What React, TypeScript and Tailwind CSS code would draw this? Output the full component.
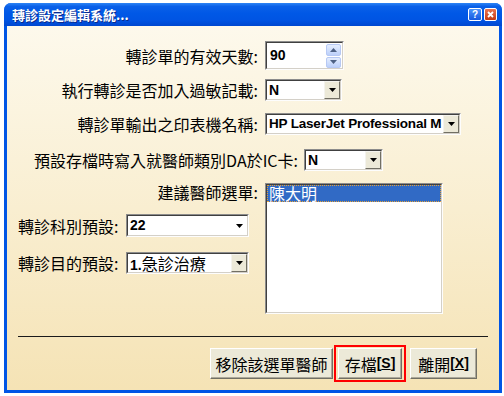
import React from 'react';

// sunken classic edit/list frame
function Field({ className, children }: { className: string; children?: React.ReactNode }) {
  return (
    <div className={`border border-t-[#8c8c8c] border-l-[#8c8c8c] border-b-[#fdfdfd] border-r-[#fdfdfd] ${className}`}>
      <div className="flex h-full w-full items-center border border-t-[#404040] border-l-[#404040] border-b-[#d4d0c8] border-r-[#d4d0c8] bg-white">
        {children}
      </div>
    </div>
  );
}

function Caret() {
  return (
    <svg width="7" height="4" viewBox="0 0 7 4">
      <path d="M0 0h7L3.5 4z" fill="#000" />
    </svg>
  );
}

function DropButton() {
  return (
    <div className="flex h-full w-[16px] shrink-0 items-center justify-center border border-t-[#f4f3ee] border-l-[#f4f3ee] border-b-[#716f64] border-r-[#716f64] bg-[#ece9d8]">
      <Caret />
    </div>
  );
}

function SpinArrow({ up }: { up?: boolean }) {
  return (
    <div className="flex h-[13px] w-[15px] items-center justify-center rounded-[2px] border border-[#b7c9f4] bg-gradient-to-b from-[#e4edfe] to-[#bcd0fa]">
      <svg width="7" height="4" viewBox="0 0 7 4">
        <path d={up ? 'M0 4L3.5 0L7 4z' : 'M0 0h7L3.5 4z'} fill="#4d6185" />
      </svg>
    </div>
  );
}

function Label({ className, children }: { className: string; children: React.ReactNode }) {
  return <div className={`text-[16px] leading-[18px] whitespace-nowrap ${className}`}>{children}</div>;
}

const latin = "font-['Liberation_Sans',Arial,sans-serif] font-bold text-[14px]";

function Button({ className, children }: { className: string; children: React.ReactNode }) {
  return (
    <div className={`flex h-[31px] items-center justify-center border border-t-white border-l-white border-b-[#716f64] border-r-[#716f64] bg-[#ece9d8] text-[16px] shadow-[inset_-1px_-1px_0_#aca899] ${className}`}>
      {children}
    </div>
  );
}

export default function App() {
  return (
    <div className="h-[396px] w-[504px] overflow-hidden bg-white font-['Noto_Sans_CJK_TC',sans-serif] text-black">
      <div className="ml-[4px] mt-[3px] flex h-[390px] w-[498px] flex-col rounded-t-[7px] bg-[#0055e5]">
        {/* title bar */}
        <div className="flex h-[23px] items-center rounded-t-[7px] bg-[linear-gradient(180deg,#2d84f5_0%,#0a60e8_15%,#0058e6_45%,#0054e3_75%,#0048d0_100%)] pl-[8px] pr-[5px]">
          <div className="flex-1 text-[13px] font-bold leading-none text-white [text-shadow:1px_1px_0_#0b2a8c]">
            轉診設定編輯系統...
          </div>
          <div className="flex h-[13px] w-[14px] items-center justify-center rounded-[2px] border border-white bg-gradient-to-b from-[#4b93fb] to-[#1457e0] font-['Liberation_Sans',sans-serif] text-[10px] font-bold leading-none text-white">
            ?
          </div>
          <div className="ml-[2px] flex h-[13px] w-[13px] items-center justify-center rounded-[2px] border border-white bg-gradient-to-b from-[#eb7450] to-[#c5390f]">
            <svg width="7" height="7" viewBox="0 0 7 7">
              <path d="M1 1l5 5M6 1l-5 5" stroke="#fff" strokeWidth="1.8" />
            </svg>
          </div>
        </div>

        {/* client area */}
        <div className="mx-[3px] mb-[3px] flex flex-1 flex-col bg-gradient-to-b from-[#fdf9ec] to-[#f5e3b5] pt-[15px]">
          <div className="flex h-[29px] items-center">
            <Label className="w-[251px] text-right">轉診單的有效天數:</Label>
            <Field className="ml-[7px] h-[29px] w-[79px]">
              <span className={`${latin} flex-1 pl-[3px]`}>90</span>
              <div className="flex flex-col gap-px self-stretch pt-[1px] pr-[1px]">
                <SpinArrow up />
                <SpinArrow />
              </div>
            </Field>
          </div>

          <div className="mt-[9px] flex h-[22px] items-center">
            <Label className="w-[251px] text-right">執行轉診是否加入過敏記載:</Label>
            <Field className="ml-[7px] h-[22px] w-[77px]">
              <span className={`${latin} flex-1 pl-[2px]`}>N</span>
              <DropButton />
            </Field>
          </div>

          <div className="mt-[12px] flex h-[22px] items-center">
            <Label className="w-[251px] text-right">轉診單輸出之印表機名稱:</Label>
            <Field className="ml-[7px] h-[22px] w-[196px]">
              <span className="flex-1 overflow-hidden whitespace-nowrap pl-[2px] font-['Liberation_Sans',Arial,sans-serif] text-[13.5px] font-bold tracking-[-0.2px]">
                HP LaserJet Professional M
              </span>
              <DropButton />
            </Field>
          </div>

          <div className="mt-[14px] flex h-[22px] items-center">
            <Label className="w-[291px] text-right">預設存檔時寫入就醫師類別DA於IC卡:</Label>
            <Field className="ml-[6px] h-[22px] w-[79px]">
              <span className={`${latin} flex-1 pl-[2px]`}>N</span>
              <DropButton />
            </Field>
          </div>

          <div className="mt-[12px] flex">
            <div className="flex w-[251px] flex-col">
              <Label className="text-right">建議醫師選單:</Label>
              <div className="mt-[13px] flex h-[23px] items-center pl-[11px]">
                <Label className="w-[108px]">轉診科別預設:</Label>
                <Field className="h-[23px] w-[123px]">
                  <span className={`${latin} flex-1 pl-[2px]`}>22</span>
                  <div className="flex w-[16px] items-center justify-center">
                    <Caret />
                  </div>
                </Field>
              </div>
              <div className="mt-[15px] flex h-[22px] items-center pl-[11px]">
                <Label className="w-[108px]">轉診目的預設:</Label>
                <Field className="h-[22px] w-[123px]">
                  <span className="flex-1 whitespace-nowrap pl-[2px] text-[16px] leading-none">
                    <span className={latin}>1.</span>急診治療
                  </span>
                  <DropButton />
                </Field>
              </div>
            </div>
            <Field className="ml-[7px] h-[131px] w-[178px] !items-start">
              <div className="flex w-full flex-col self-stretch">
                <div className="h-[17px] w-full border border-dotted border-[#e3a13b] bg-[#316ac5] pl-[1px] text-[16px] leading-[15px] text-white">
                  陳大明
                </div>
              </div>
            </Field>
          </div>

          <div className="ml-[11px] mt-[22px] h-px w-[470px] bg-[#1a1a1a]" />

          <div className="mt-[8px] flex items-center justify-end pr-[22px]">
            <Button className="w-[123px]">移除該選單醫師</Button>
            <div className="ml-px flex h-[37px] w-[72px] items-center justify-center border-2 border-[#ff0000]">
              <Button className="w-[64px]">
                存檔<span className={latin}>[<span className="underline">S</span>]</span>
              </Button>
            </div>
            <Button className="ml-[4px] w-[67px]">
              離開<span className={latin}>[<span className="underline">X</span>]</span>
            </Button>
          </div>
        </div>
      </div>
    </div>
  );
}
